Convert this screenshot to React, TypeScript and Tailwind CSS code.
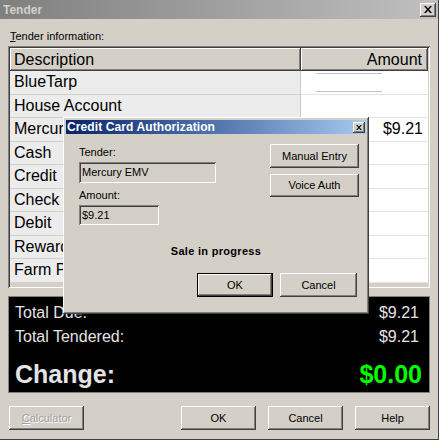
import React from 'react';

const raised =
  'shadow-[inset_-1px_-1px_#404040,inset_1px_1px_#ffffff,inset_-2px_-2px_#808080,inset_2px_2px_#d4d0c8]';
const sunken =
  'shadow-[inset_1px_1px_#808080,inset_-1px_-1px_#ffffff,inset_2px_2px_#404040,inset_-2px_-2px_#d4d0c8]';

function CloseBox({ small }: { small?: boolean }) {
  return (
    <div
      className={`flex items-center justify-center bg-[#d4d0c8] ${raised} ${
        small ? 'w-[12px] h-[11px]' : 'w-[16px] h-[14px]'
      }`}
    >
      <svg width={small ? 6 : 8} height={small ? 5 : 7} viewBox="0 0 8 7">
        <path d="M0 0h2l2 2.5L6 0h2L5 3.5 8 7H6L4 4.5 2 7H0l3-3.5z" fill="#000" />
      </svg>
    </div>
  );
}

function WinButton({
  label,
  w,
  h = 'h-[24px]',
  disabled,
  def,
}: {
  label: React.ReactNode;
  w: string;
  h?: string;
  disabled?: boolean;
  def?: boolean;
}) {
  return (
    <div className={`${w} ${h} ${def ? 'border border-black' : ''} bg-[#d4d0c8]`}>
      <div
        className={`w-full h-full flex items-center justify-center text-[11px] ${raised} ${
          disabled ? 'text-[#a0a0a0] [text-shadow:1px_1px_#ffffff]' : 'text-black'
        }`}
      >
        {label}
      </div>
    </div>
  );
}

const rows = [
  { name: 'BlueTarp', amount: '' },
  { name: 'House Account', amount: '' },
  { name: 'Mercury EMV', amount: '$9.21' },
  { name: 'Cash', amount: '' },
  { name: 'Credit', amount: '' },
  { name: 'Check', amount: '' },
  { name: 'Debit', amount: '' },
  { name: 'Rewards', amount: '' },
  { name: 'Farm Plan', amount: '' },
];

function AuthDialog() {
  return (
    <div
      className={`absolute left-[63px] top-[117px] w-[306px] h-[197px] bg-[#d4d0c8] p-[3px] flex flex-col ${raised}`}
    >
      <div className="h-[14px] flex items-center justify-between bg-gradient-to-r from-[#0a246a] to-[#a6caf0] pl-[1px] pr-[1px]">
        <span className="text-white font-bold text-[12px] leading-none tracking-[0.1px]">
          Credit Card Authorization
        </span>
        <CloseBox small />
      </div>
      <div className="flex justify-between pl-[13px] pr-[7px]">
        <div className="flex flex-col">
          <span className="mt-[12px] text-[11px] leading-[13px]">Tender:</span>
          <div
            className={`mt-[3px] w-[137px] h-[21px] flex items-center px-[3px] text-[11px] ${sunken}`}
          >
            Mercury EMV
          </div>
          <span className="mt-[6px] text-[11px] leading-[13px]">Amount:</span>
          <div
            className={`mt-[3px] w-[80px] h-[20px] flex items-center px-[3px] text-[11px] ${sunken}`}
          >
            $9.21
          </div>
        </div>
        <div className="flex flex-col pt-[10px] gap-[6px]">
          <WinButton label="Manual Entry" w="w-[89px]" />
          <WinButton label="Voice Auth" w="w-[89px]" h="h-[23px]" />
        </div>
      </div>
      <div className="mt-[19px] text-center font-bold text-[11px] leading-[14px] tracking-[0.3px]">
        Sale in progress
      </div>
      <div className="mt-[15px] flex justify-end gap-[7px] pr-[9px]">
        <WinButton label="OK" w="w-[76px]" def />
        <WinButton label="Cancel" w="w-[77px]" />
      </div>
    </div>
  );
}

export default function App() {
  return (
    <div
      className="relative w-[439px] h-[440px] bg-[#d4d0c8] text-black overflow-hidden border-r border-b border-[#404040]"
      style={{ fontFamily: '"Liberation Sans", Arial, sans-serif' }}
    >
      {/* title bar */}
      <div className="h-[19px] flex items-center justify-between bg-gradient-to-r from-[#808080] to-[#c0c0c0] pl-[3px] pr-[2px]">
        <span className="text-[#d4d0c8] font-bold text-[12px]">Tender</span>
        <CloseBox />
      </div>

      <div className="px-[8px] pr-[8px]">
        <div className="mt-[10px] h-[14px] pl-[2px] text-[11px] leading-[14px]">
          <span className="underline">T</span>ender information:
        </div>

        {/* list */}
        <div className={`mt-[3px] w-[422px] h-[242px] bg-[#d4d0c8] p-[2px] ${sunken}`}>
          <div className="flex h-[23px] text-[16px]">
            <div className={`w-[292px] flex items-center pl-[4px] ${raised}`}>Description</div>
            <div className={`w-[128px] flex items-center justify-end pr-[6px] ${raised}`}>
              Amount
            </div>
          </div>
          {rows.map((r, i) => (
            <div key={r.name} className="flex h-[23.5px] text-[16px]">
              <div className="w-[292px] flex items-center pl-[4px] bg-[#ececec] border-b border-[#d4d0c8] border-r border-r-[#c8c8c8]">
                {r.name}
              </div>
              <div className="relative w-[128px] flex items-center justify-end pr-[5px] bg-white border-b border-[#e4e4e4]">
                {i === 0 && (
                  <>
                    <div className="absolute left-[15px] top-[2px] w-[66px] h-px bg-[#b8c4dc]" />
                    <div className="absolute left-[15px] top-[20px] w-[66px] h-px bg-[#b8c4dc]" />
                  </>
                )}
                {r.amount}
              </div>
            </div>
          ))}
        </div>

        {/* totals */}
        <div className="mt-[8px] w-[422px] h-[97px] bg-black border border-[#808080] px-[6px] text-[#e4e4e4]">
          <div className="flex justify-between items-center h-[22px] mt-[5px] text-[16px] pr-[4px]">
            <span>Total Due:</span>
            <span>$9.21</span>
          </div>
          <div className="flex justify-between items-center h-[22px] mt-[2px] text-[16px] pr-[4px]">
            <span>Total Tendered:</span>
            <span>$9.21</span>
          </div>
          <div className="flex justify-between items-center h-[30px] mt-[12px] font-bold text-[25px]">
            <span>Change:</span>
            <span className="text-[#00ff00] pr-[1px]">$0.00</span>
          </div>
        </div>

        {/* buttons */}
        <div className="mt-[13px] flex items-center">
          <div className="ml-[1px]">
            <WinButton
              label={
                <>
                  <span className="underline">C</span>alculator
                </>
              }
              w="w-[75px]"
              disabled
            />
          </div>
          <div className="ml-auto flex gap-[12px]">
            <WinButton label="OK" w="w-[75px]" />
            <WinButton label="Cancel" w="w-[75px]" />
            <WinButton label="Help" w="w-[75px]" />
          </div>
        </div>
      </div>

      <AuthDialog />
    </div>
  );
}
